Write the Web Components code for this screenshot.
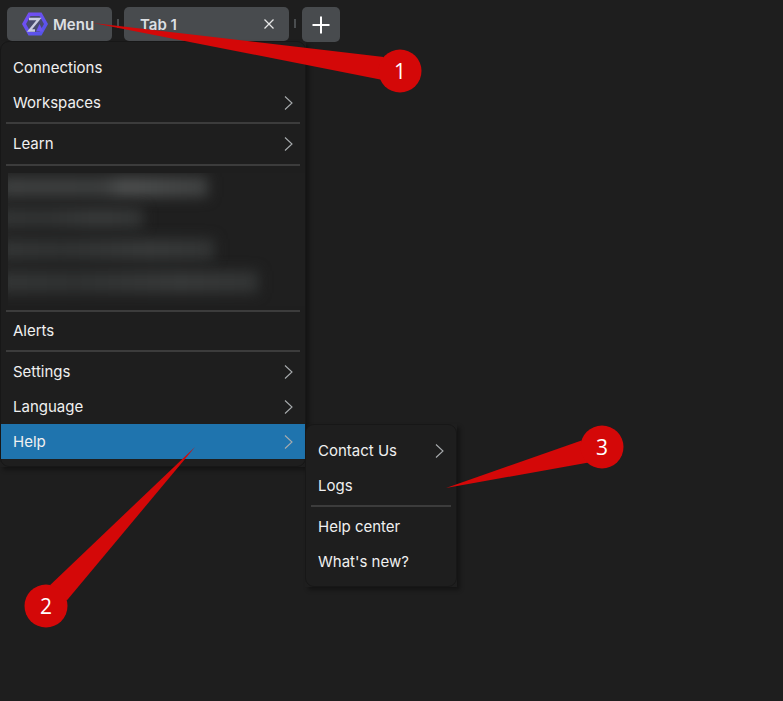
<!DOCTYPE html>
<html>
<head>
<meta charset="utf-8">
<title>Menu</title>
<style>
html, body { height: 100%; }
body {
    margin: 0;
    background: #1e1e1e;
    color: #f0f0f0;
    font-family: Inter, "Liberation Sans", sans-serif;
    font-size: 15px;
    overflow: hidden;
}
</style>
</head>
<body>
<app-shell>
    <tab-bar slot="bar">
        <tab-button kind="menu">
            <svg slot="icon" width="26" height="24" viewBox="0 0 26 24">
                <defs>
                    <linearGradient id="hex" x1="0" y1="0" x2="1" y2="1">
                        <stop offset="0" stop-color="#7a4df5"/>
                        <stop offset="1" stop-color="#4f55e8"/>
                    </linearGradient>
                </defs>
                <path d="M6.5 0.5H19.5L26 12L19.5 23.5H6.5L0 12Z" fill="url(#hex)"/>
                <path d="M8.5 4H17.5L22 12L17.5 20H8.5L4 12Z" fill="#484b6e"/>
                <path d="M7 7H17L7.5 18.5H13" fill="none" stroke="#c9cce0" stroke-width="2.4"/>
                <path d="M17.5 12L21.5 19.5H14Z" fill="#6a55f0"/>
            </svg>
            Menu
        </tab-button>
        <tab-sep></tab-sep>
        <tab-button kind="tab">Tab 1</tab-button>
        <tab-sep class="last"></tab-sep>
        <tab-button kind="add"></tab-button>
    </tab-bar>
    <pop-menu>
        <menu-item>Connections</menu-item>
        <menu-item more>Workspaces</menu-item>
        <menu-divider></menu-divider>
        <menu-item more>Learn</menu-item>
        <menu-divider class="loose"></menu-divider>
        <blur-block></blur-block>
        <menu-divider class="tight"></menu-divider>
        <menu-item>Alerts</menu-item>
        <menu-divider></menu-divider>
        <menu-item more>Settings</menu-item>
        <menu-item more>Language</menu-item>
        <menu-item more active>Help
            <pop-menu slot="sub" class="sub">
                <menu-item more>Contact Us</menu-item>
                <menu-item>Logs</menu-item>
                <menu-divider></menu-divider>
                <menu-item>Help center</menu-item>
                <menu-item>What's new?</menu-item>
            </pop-menu>
        </menu-item>
    </pop-menu>
</app-shell>
<call-outs></call-outs>

<script>
class AppShell extends HTMLElement {
    constructor() {
        super();
        this.attachShadow({ mode: 'open' });
        this.shadowRoot.innerHTML = `
<style>
:host { display: block; }
.bar { padding: 7px 0 0 7px; }
.menu { display: block; margin-top: -1px; }
</style>
<div class="bar"><slot name="bar"></slot></div>
<div class="menu"><slot></slot></div>`;
    }
}
customElements.define('app-shell', AppShell);

class TabBar extends HTMLElement {
    constructor() {
        super();
        this.attachShadow({ mode: 'open' });
        this.shadowRoot.innerHTML = `
<style>
:host { display: flex; align-items: flex-start; height: 35px; }
</style>
<slot></slot>`;
    }
}
customElements.define('tab-bar', TabBar);

class TabSep extends HTMLElement {
    constructor() {
        super();
        this.attachShadow({ mode: 'open' });
        this.shadowRoot.innerHTML = `
<style>
:host { display: block; width: 2px; height: 9px; margin: 12px 5px 0 5px; background: #4a4d4f; }
:host(.last) { margin-right: 6px; }
</style>`;
    }
}
customElements.define('tab-sep', TabSep);

class TabButton extends HTMLElement {
    constructor() {
        super();
        const kind = this.getAttribute('kind');
        const close = `<svg class="x" width="12" height="12" viewBox="0 0 12 12"><path d="M1.5 1.5L10.5 10.5M10.5 1.5L1.5 10.5" stroke="#e6e6e6" stroke-width="1.3" fill="none"/></svg>`;
        const plus = `<svg width="18" height="18" viewBox="0 0 18 18"><path d="M9 0.5V17.5M0.5 9H17.5" stroke="#fff" stroke-width="2" fill="none"/></svg>`;
        this.attachShadow({ mode: 'open' });
        this.shadowRoot.innerHTML = `
<style>
:host {
    display: flex;
    align-items: center;
    box-sizing: border-box;
    height: 34px;
    background: #484b4e;
    border-radius: 5px;
    color: #dcdfe2;
    font-weight: 600;
    font-size: 15px;
}
:host([kind="menu"]) { width: 105px; padding-left: 15px; gap: 5px; }
:host([kind="tab"]) { width: 165px; padding: 0 14px 0 16px; justify-content: space-between; }
:host([kind="add"]) { width: 38px; height: 35px; justify-content: center; }
::slotted(svg) { display: block; flex: none; }
svg { display: block; }
</style>
<slot name="icon"></slot>
<span><slot></slot></span>
${kind === 'tab' ? close : ''}${kind === 'add' ? plus : ''}`;
    }
}
customElements.define('tab-button', TabButton);

class PopMenu extends HTMLElement {
    constructor() {
        super();
        this.attachShadow({ mode: 'open' });
        this.shadowRoot.innerHTML = `
<style>
:host {
    display: block;
    position: relative;
    isolation: isolate;
    box-sizing: border-box;
    width: 306px;
    padding: 8px 0 7px;
    background: #1e1e1e;
    border: 1px solid #171717;
    border-radius: 9px;
    color: #f0f0f0;
}
/* the shadow comes from a square box, so it leaves a notch at the round corners */
:host::before {
    content: "";
    position: absolute;
    inset: -1px;
    z-index: -1;
    box-shadow: 3px 3px 4px rgba(0, 0, 0, .35);
}
:host(.sub) {
    position: absolute;
    left: 304px;
    top: 0;
    width: 152px;
    z-index: 2;
}
</style>
<slot></slot>`;
    }
}
customElements.define('pop-menu', PopMenu);

class MenuItem extends HTMLElement {
    constructor() {
        super();
        const more = this.hasAttribute('more');
        this.attachShadow({ mode: 'open' });
        this.shadowRoot.innerHTML = `
<style>
:host {
    display: flex;
    align-items: center;
    justify-content: space-between;
    height: 35px;
    padding: 0 12px;
    font-size: 15px;
    position: relative;
}
:host([active]) { background: #1f74ae; }
svg { display: block; flex: none; }
</style>
<span><slot></slot></span>
${more ? `<svg width="9" height="14" viewBox="0 0 9 14"><path d="M1 0.5L8 7L1 13.5" fill="none" stroke="#a8acae" stroke-width="1.1"/></svg>` : ''}
<slot name="sub"></slot>`;
    }
}
customElements.define('menu-item', MenuItem);

class MenuDivider extends HTMLElement {
    constructor() {
        super();
        this.attachShadow({ mode: 'open' });
        this.shadowRoot.innerHTML = `
<style>
:host { display: block; height: 2px; margin: 2px 5px; background: #3c3c3c; }
:host(.loose) { margin-top: 3px; margin-bottom: 7px; }
:host(.tight) { margin-top: 4px; margin-bottom: 1px; }
</style>`;
    }
}
customElements.define('menu-divider', MenuDivider);

class BlurBlock extends HTMLElement {
    constructor() {
        super();
        this.attachShadow({ mode: 'open' });
        this.shadowRoot.innerHTML = `
<style>
:host {
    display: flex;
    flex-direction: column;
    gap: 11px;
    box-sizing: border-box;
    height: 133px;
    margin-left: 7px;
    padding: 4px 0 0 0;
    background: #1f1f1f;
    overflow: hidden;
}
i { display: block; height: 20px; filter: blur(6.5px); margin-left: -10px; background: linear-gradient(90deg, #343636, #303232 30%, #383a3a 70%, #333535); }
i:nth-of-type(1) { width: 210px; background: linear-gradient(90deg, #3e4040, #3c3e3e 50%, #4e5050 60%, #404242); }
i:nth-of-type(2) { width: 145px; height: 20px; }
i:nth-of-type(3) { width: 216px; height: 21px; }
i:nth-of-type(4) { width: 260px; height: 22px; }
</style>
<i></i><i></i><i></i><i></i>`;
    }
}
customElements.define('blur-block', BlurBlock);

class CallOuts extends HTMLElement {
    constructor() {
        super();
        const pins = [
            { n: 1, cx: 400, cy: 71, tx: 93, ty: 23 },
            { n: 2, cx: 46, cy: 606, tx: 195, ty: 447 },
            { n: 3, cx: 602, cy: 447, tx: 446, ty: 488 }
        ];
        const r = 21.5;
        const shapes = pins.map(p => {
            // wedge from the tip to two points on the circle, 32 degrees off its axis
            const a = Math.atan2(p.ty - p.cy, p.tx - p.cx);
            const b = 32 * Math.PI / 180;
            const x1 = p.cx + r * Math.cos(a + b), y1 = p.cy + r * Math.sin(a + b);
            const x2 = p.cx + r * Math.cos(a - b), y2 = p.cy + r * Math.sin(a - b);
            return `<path d="M${p.tx} ${p.ty}L${x1.toFixed(1)} ${y1.toFixed(1)}L${x2.toFixed(1)} ${y2.toFixed(1)}Z" fill="#d40808"/>
<circle cx="${p.cx}" cy="${p.cy}" r="${r}" fill="#d40808"/>
<text x="${p.cx}" y="${p.cy + 8}" text-anchor="middle">${p.n}</text>`;
        }).join('');
        this.attachShadow({ mode: 'open' });
        this.shadowRoot.innerHTML = `
<style>
:host { position: absolute; left: 0; top: 0; width: 783px; height: 701px; pointer-events: none; z-index: 5; }
svg { display: block; }
text { fill: #fff; font: 500 21px "Open Sans", "Liberation Sans", sans-serif; }
</style>
<svg width="783" height="701" viewBox="0 0 783 701">${shapes}</svg>`;
    }
}
customElements.define('call-outs', CallOuts);
</script>
</body>
</html>
